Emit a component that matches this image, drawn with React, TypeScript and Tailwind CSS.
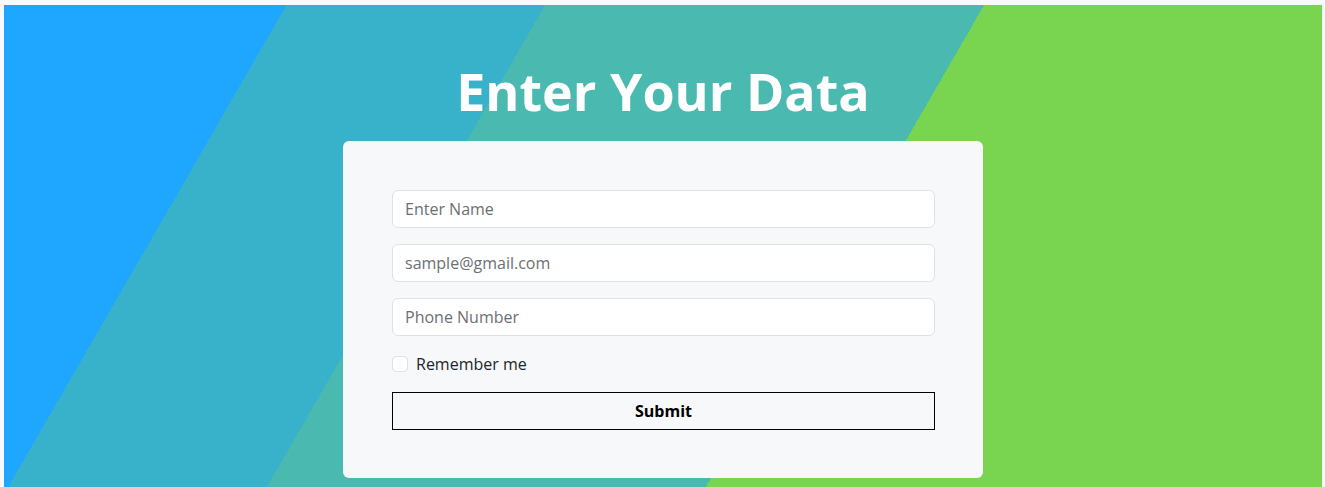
export default function App() {
  return (
    <div className="bg-[#f7f9fb] pt-[5px] pl-1 pr-[3px] font-['Open_Sans',sans-serif]">
      <main className="h-[482px] flex flex-col items-center pt-[55px] bg-[linear-gradient(120deg,#1fa6ff_17.7%,#38b2ca_17.7%,#38b2ca_33.9%,#4ab9b0_33.9%,#4ab9b0_61.4%,#79d44f_61.4%)]">
        <h1 className="text-[52px] leading-[1.2] font-bold text-white mb-[19px]">
          Enter Your Data
        </h1>

        <form className="w-[640px] bg-[#f7f8fa] rounded-md pt-[49px] pb-12 pl-[49px] pr-12 flex flex-col gap-4">
          <input
            type="text"
            placeholder="Enter Name"
            className="h-[38px] px-3 bg-white border border-[#dee2e6] rounded-md text-base placeholder:text-[#6c6f73] outline-none"
          />
          <input
            type="email"
            placeholder="sample@gmail.com"
            className="h-[38px] px-3 bg-white border border-[#dee2e6] rounded-md text-base placeholder:text-[#6c6f73] outline-none"
          />
          <input
            type="tel"
            placeholder="Phone Number"
            className="h-[38px] px-3 bg-white border border-[#dee2e6] rounded-md text-base placeholder:text-[#6c6f73] outline-none"
          />
          <label className="h-6 flex items-center gap-2 text-base text-[#212529]">
            <span className="w-4 h-4 bg-white border border-[#dee2e6] rounded" />
            Remember me
          </label>
          <button
            type="button"
            className="h-[38px] border border-black text-base font-bold text-black"
          >
            Submit
          </button>
        </form>
      </main>
    </div>
  );
}
